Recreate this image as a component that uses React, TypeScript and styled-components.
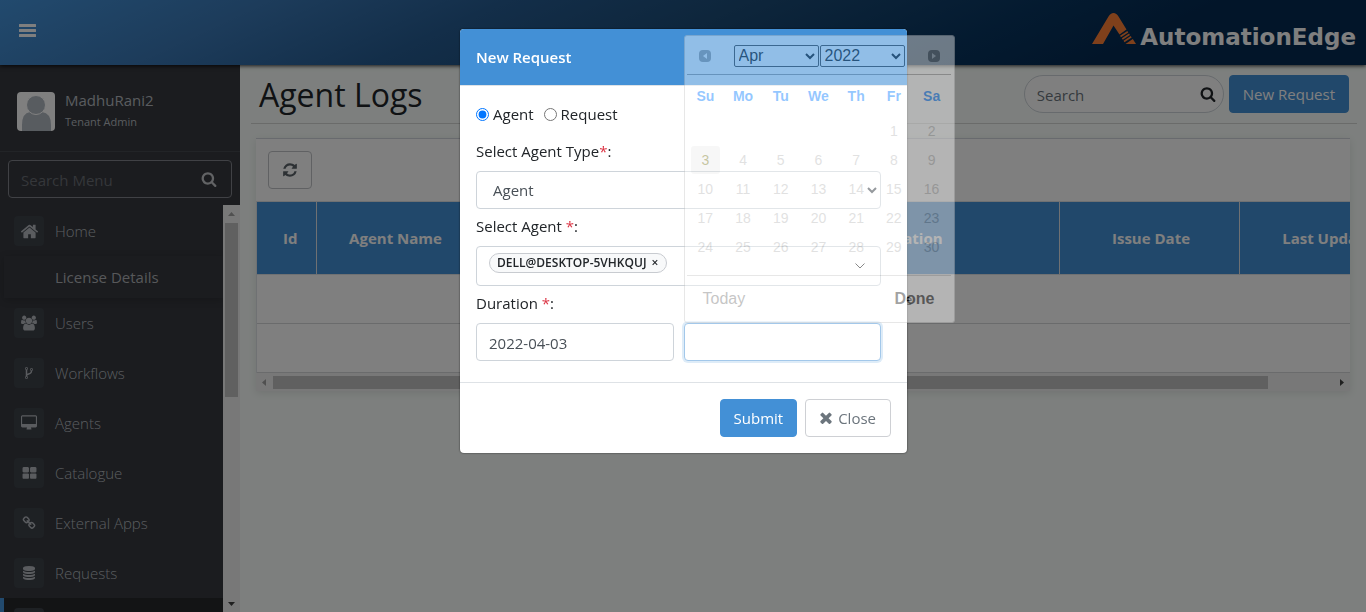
import React from 'react';
import styled, { createGlobalStyle } from 'styled-components';

const GlobalStyle = createGlobalStyle`
  *, *::before, *::after { box-sizing: border-box; }
  html, body, #root { height: 100%; }
  body {
    margin: 0;
    overflow: hidden;
    background: #fafffc;
    color: #212529;
    font-family: 'Open Sans', 'Noto Sans', sans-serif;
    font-size: 15px;
    line-height: 24px;
  }
  button, input, select { font: inherit; margin: 0; }
  a { color: inherit; text-decoration: none; }
`;

const icons = {
  home: {
    box: '0 0 1792 1792',
    d: 'M1472 992v480q0 26-19 45t-45 19h-384v-384h-256v384h-384q-26 0-45-19t-19-45v-480q0-1 .5-3t.5-3l575-474 575 474q1 2 1 6zm223-69l-62 74q-8 9-21 11h-3q-13 0-21-7l-692-577-692 577q-12 8-24 7-13-2-21-11l-62-74q-8-10-7-23.5t11-21.5l719-599q32-26 76-26t76 26l244 204v-195q0-14 9-23t23-9h192q14 0 23 9t9 23v408l219 182q10 8 11 21.5t-7 23.5z',
  },
  users: {
    box: '0 0 1920 1792',
    d: 'M593 896q-162 5-265 128h-134q-82 0-138-40.5t-56-118.5q0-353 124-353 6 0 43.5 21t97.5 42.5 119 21.5q67 0 133-23-5 37-5 66 0 139 81 256zm1071 637q0 120-73 189.5t-194 69.5h-874q-121 0-194-69.5t-73-189.5q0-53 3.5-103.5t14-109 26.5-108.5 43-97.5 62-81 85.5-53.5 111.5-20q10 0 43 21.5t73 48 107 48 135 21.5 135-21.5 107-48 73-48 43-21.5q61 0 111.5 20t85.5 53.5 62 81 43 97.5 26.5 108.5 14 109 3.5 103.5zm-1024-1277q0 106-75 181t-181 75-181-75-75-181 75-181 181-75 181 75 75 181zm704 384q0 159-112.5 271.5t-271.5 112.5-271.5-112.5-112.5-271.5 112.5-271.5 271.5-112.5 271.5 112.5 112.5 271.5zm576 225q0 78-56 118.5t-138 40.5h-134q-103-123-265-128 81-117 81-256 0-29-5-66 66 23 133 23 59 0 119-21.5t97.5-42.5 43.5-21q124 0 124 353zm-128-609q0 106-75 181t-181 75-181-75-75-181 75-181 181-75 181 75 75 181z',
  },
  fork: {
    box: '0 0 1792 1792',
    d: 'M672 1472q0-40-28-68t-68-28-68 28-28 68 28 68 68 28 68-28 28-68zm0-1152q0-40-28-68t-68-28-68 28-28 68 28 68 68 28 68-28 28-68zm640 128q0-40-28-68t-68-28-68 28-28 68 28 68 68 28 68-28 28-68zm96 0q0 52-26 96.5t-70 69.5q-2 287-226 414-67 38-203 81-128 40-169.5 71t-41.5 100v26q44 25 70 69.5t26 96.5q0 80-56 136t-136 56-136-56-56-136q0-52 26-96.5t70-69.5v-820q-44-25-70-69.5t-26-96.5q0-80 56-136t136-56 136 56 56 136q0 52-26 96.5t-70 69.5v497q54-26 154-57 55-17 87.5-29.5t70.5-31 59-39.5 40.5-51 28-69.5 8.5-91.5q-44-25-70-69.5t-26-96.5q0-80 56-136t136-56 136 56 56 136z',
  },
  desktop: {
    box: '0 0 1856 1792',
    d: 'M1728 992v-832q0-13-9.5-22.5t-22.5-9.5h-1536q-13 0-22.5 9.5t-9.5 22.5v832q0 13 9.5 22.5t22.5 9.5h1536q13 0 22.5-9.5t9.5-22.5zm128-832v1088q0 66-47 113t-113 47h-544q0 37 16 77.5t32 71 16 43.5q0 26-19 45t-45 19h-448q-26 0-45-19t-19-45q0-14 16-44t32-70 16-78h-544q-66 0-113-47t-47-113v-1088q0-66 47-113t113-47h1536q66 0 113 47t47 113z',
  },
  grid: {
    box: '0 0 1792 1792',
    d: 'M832 1024v384q0 52-38 90t-90 38h-512q-52 0-90-38t-38-90v-384q0-52 38-90t90-38h512q52 0 90 38t38 90zm0-768v384q0 52-38 90t-90 38h-512q-52 0-90-38t-38-90v-384q0-52 38-90t90-38h512q52 0 90 38t38 90zm896 768v384q0 52-38 90t-90 38h-512q-52 0-90-38t-38-90v-384q0-52 38-90t90-38h512q52 0 90 38t38 90zm0-768v384q0 52-38 90t-90 38h-512q-52 0-90-38t-38-90v-384q0-52 38-90t90-38h512q52 0 90 38t38 90z',
  },
  link: {
    box: '0 0 1792 1792',
    d: 'M1520 1216q0-40-28-68l-208-208q-28-28-68-28-42 0-72 32 3 3 19 18.5t21.5 21.5 15 19 13 25.5 3.5 27.5q0 40-28 68t-68 28q-15 0-27.5-3.5t-25.5-13-19-15-21.5-21.5-18.5-19q-33 31-33 73 0 40 28 68l206 207q27 27 68 27 40 0 68-26l147-146q28-28 28-67zm-703-705q0-40-28-68l-206-207q-28-28-68-28-39 0-68 27l-147 146q-28 28-28 67 0 40 28 68l208 208q27 27 68 27 42 0 72-31-3-3-19-18.5t-21.5-21.5-15-19-13-25.5-3.5-27.5q0-40 28-68t68-28q15 0 27.5 3.5t25.5 13 19 15 21.5 21.5 18.5 19q33-31 33-73zm895 705q0 120-85 203l-147 146q-83 83-203 83-121 0-204-85l-206-207q-83-83-83-203 0-123 88-209l-88-88q-86 88-208 88-120 0-204-84l-208-208q-84-84-84-204t85-203l147-146q83-83 203-83 121 0 204 85l206 207q83 83 83 203 0 123-88 209l88 88q86-88 208-88 120 0 204 84l208 208q84 84 84 204z',
  },
  database: {
    box: '0 0 1792 1792',
    d: 'M896 768q237 0 443-43t325-127v170q0 69-103 128t-280 93.5-385 34.5-385-34.5-280-93.5-103-128v-170q119 84 325 127t443 43zm0 768q237 0 443-43t325-127v170q0 69-103 128t-280 93.5-385 34.5-385-34.5-280-93.5-103-128v-170q119 84 325 127t443 43zm0-384q237 0 443-43t325-127v170q0 69-103 128t-280 93.5-385 34.5-385-34.5-280-93.5-103-128v-170q119 84 325 127t443 43zm0-1152q208 0 385 34.5t280 93.5 103 128v128q0 69-103 128t-280 93.5-385 34.5-385-34.5-280-93.5-103-128v-128q0-69 103-128t280-93.5 385-34.5z',
  },
  search: {
    box: '0 0 1792 1792',
    d: 'M1216 832q0-185-131.5-316.5t-316.5-131.5-316.5 131.5-131.5 316.5 131.5 316.5 316.5 131.5 316.5-131.5 131.5-316.5zm512 832q0 52-38 90t-90 38q-54 0-90-38l-343-342q-179 124-399 124-143 0-273.5-55.5t-225-150-150-225-55.5-273.5 55.5-273.5 150-225 225-150 273.5-55.5 273.5 55.5 225 150 150 225 55.5 273.5q0 220-124 399l343 343q37 37 37 90z',
  },
  refresh: {
    box: '0 0 1792 1792',
    d: 'M1639 1056q0 5-1 7-64 268-268 434.5t-478 166.5q-146 0-282.5-55t-243.5-157l-129 129q-19 19-45 19t-45-19-19-45v-448q0-26 19-45t45-19h448q26 0 45 19t19 45-19 45l-137 137q71 66 161 102t187 36q134 0 250-65t186-179q11-17 53-117 8-23 30-23h192q13 0 22.5 9.5t9.5 22.5zm25-800v448q0 26-19 45t-45 19h-448q-26 0-45-19t-19-45 19-45l138-138q-148-137-349-137-134 0-250 65t-186 179q-11 17-53 117-8 23-30 23h-199q-13 0-22.5-9.5t-9.5-22.5v-7q65-268 270-434.5t480-166.5q146 0 284 55.5t245 156.5l130-129q19-19 45-19t45 19 19 45z',
  },
  times: {
    box: '302 302 1188 1252',
    d: 'M1490 1322q0 40-28 68l-136 136q-28 28-68 28t-68-28l-294-294-294 294q-28 28-68 28t-68-28l-136-136q-28-28-28-68t28-68l294-294-294-294q-28-28-28-68t28-68l136-136q28-28 68-28t68 28l294 294 294-294q28-28 68-28t68 28l136 136q28 28 28 68t-28 68l-294 294 294 294q28 28 28 68z',
  },
  bars: {
    box: '0 0 17 13',
    d: 'M0.5 0h16q.5 0 .5.5v2q0 .5-.5.5h-16q-.5 0-.5-.5v-2q0-.5.5-.5zM0.5 5h16q.5 0 .5.5v2q0 .5-.5.5h-16q-.5 0-.5-.5v-2q0-.5.5-.5zM0.5 10h16q.5 0 .5.5v2q0 .5-.5.5h-16q-.5 0-.5-.5v-2q0-.5.5-.5z',
  },
};

type IconName = keyof typeof icons;

const Glyph = styled.svg<{ $size: number }>`
  display: block;
  flex: none;
  width: ${(p) => p.$size}px;
  height: ${(p) => p.$size}px;
  fill: currentColor;
`;

const Icon = ({ name, size }: { name: IconName; size: number }) => (
  <Glyph $size={size} viewBox={icons[name].box} aria-hidden="true">
    <path d={icons[name].d} />
  </Glyph>
);

/* ---------- page shell ---------- */

const Shell = styled.div`
  display: flex;
  flex-direction: column;
  height: 100%;
`;

const TopBar = styled.header`
  position: relative;
  z-index: 2;
  display: flex;
  flex: none;
  align-items: center;
  justify-content: space-between;
  height: 65px;
  padding: 0 10px 4px 19px;
  background: linear-gradient(155deg, #4494dc 0%, #3a78b6 18%, #265c92 34%, #1c4c78 50%, #083560 70%, #042a52 82%);
  box-shadow: 0 1px 4px rgba(0, 0, 0, 0.8);
`;

const MenuButton = styled.button`
  padding: 0;
  border: 0;
  background: none;
  color: #fff;
`;

const Brand = styled.a`
  display: flex;
  align-items: flex-end;
  gap: 4px;
  color: #fff;
`;

const BrandMark = styled.svg`
  display: block;
  width: 44px;
  height: 31px;
  margin-bottom: 5px;
`;

const BrandName = styled.span`
  font-family: 'DejaVu Sans', sans-serif;
  font-weight: 700;
  font-size: 23px;
  line-height: 24px;
`;

const Columns = styled.div`
  display: flex;
  flex: 1;
  min-height: 0;
`;

/* ---------- sidebar ---------- */

const Sidebar = styled.aside`
  display: flex;
  flex: none;
  flex-direction: column;
  width: 240px;
  background: #36383e;
  color: #b4b8be;
`;

const Profile = styled.div`
  display: flex;
  flex: none;
  align-items: center;
  gap: 10px;
  height: 87px;
  padding: 6px 17px 0;
  border-bottom: 1px solid #45484f;
`;

const Avatar = styled.svg`
  display: block;
  width: 38px;
  height: 39px;
  border-radius: 4px;
  background: #fff;
`;

const ProfileText = styled.div`
  display: flex;
  flex-direction: column;
`;

const UserName = styled.span`
  line-height: 22px;
`;

const UserRole = styled.span`
  font-size: 11px;
  line-height: 22px;
`;

const MenuSearch = styled.label`
  display: flex;
  flex: none;
  align-items: center;
  height: 38px;
  margin: 8px 8px 7px;
  padding: 0 14px 0 12px;
  border: 1px solid #80838a;
  border-radius: 4px;
  color: #c4c6ca;
`;

const PlainInput = styled.input<{ $hint: string }>`
  flex: 1;
  min-width: 0;
  padding: 2px 0 0;
  border: 0;
  outline: 0;
  background: none;
  color: inherit;
  &::placeholder { color: ${(p) => p.$hint}; opacity: 1; }
`;

const MenuArea = styled.div`
  display: flex;
  flex: 1;
  min-height: 0;
`;

const Menu = styled.nav`
  flex: 1;
  overflow: hidden;
  padding-top: 1px;
  font-weight: 300;
`;

const MenuItem = styled.a<{ $active?: boolean }>`
  display: flex;
  align-items: center;
  gap: 11px;
  height: 50px;
  padding-left: ${(p) => (p.$active ? 10 : 14)}px;
  border-left: ${(p) => (p.$active ? '4px solid #4494dc' : '0')};
  background: ${(p) => (p.$active ? '#26282b' : 'none')};
`;

const SubItem = styled.a`
  display: flex;
  align-items: center;
  height: 42px;
  margin-left: 4px;
  padding-left: 51px;
  color: #aeb1b5;
  font-weight: 400;
  box-shadow: 0 2px 8px rgba(0, 0, 0, 0.2);
`;

const IconTile = styled.span`
  display: grid;
  place-items: center;
  width: 30px;
  height: 30px;
  border-radius: 4px;
  background: #3c4249;
`;

const Rail = styled.div<{ $across?: boolean }>`
  display: flex;
  flex: none;
  flex-direction: ${(p) => (p.$across ? 'row' : 'column')};
  align-items: center;
  justify-content: space-between;
  ${(p) => (p.$across ? 'height: 18px; padding: 0 4px;' : 'width: 17px; padding: 5px 0;')}
  background: #f1f1f1;
`;

const Track = styled.div<{ $across?: boolean }>`
  flex: 1;
  ${(p) => (p.$across ? 'height: 13px; margin: 0 7px 0 6px;' : 'width: 13px; margin: 6px 0;')}
`;

const Thumb = styled.div<{ $across?: boolean }>`
  background: #c1c1c1;
  ${(p) => (p.$across ? 'height: 13px; width: 94%;' : 'width: 13px; height: 47%;')}
`;

const Arrow = styled.svg`
  display: block;
  flex: none;
  width: 7px;
  height: 7px;
`;

/* ---------- content ---------- */

const Main = styled.main`
  flex: 1;
  min-width: 0;
  padding: 0 9px 0 11px;
`;

const TitleBar = styled.div`
  display: flex;
  align-items: center;
  gap: 5px;
  height: 59px;
  padding: 0 8px;
  border-bottom: 1px solid #d4d6d5;
`;

const Title = styled.h1`
  flex: 1;
  margin: 0;
  padding-top: 2px;
  font-size: 32px;
  font-weight: 400;
  line-height: 40px;
`;

const SearchPill = styled.label`
  display: flex;
  align-items: center;
  width: 200px;
  height: 38px;
  padding: 0 7px 0 12px;
  border: 1px solid #ced4da;
  border-radius: 19px;
  background: #fff;
  color: #212529;
`;

const Button = styled.button<{ $primary?: boolean }>`
  display: flex;
  align-items: center;
  justify-content: center;
  gap: 6px;
  height: 38px;
  padding: 0 ${(p) => (p.$primary ? 13 : 14)}px;
  border: 1px solid ${(p) => (p.$primary ? '#4390d6' : '#ced0d4')};
  border-radius: 4px;
  background: ${(p) => (p.$primary ? '#4390d6' : '#fff')};
  color: ${(p) => (p.$primary ? '#fff' : '#6c757d')};
`;

const Card = styled.section`
  margin: 14px 7px 0 5px;
  border-top: 1px solid #d0d4dc;
  background: #fff;
  box-shadow: 0 2px 8px rgba(0, 0, 0, 0.1);
`;

const CardTools = styled.div`
  padding: 12px;
`;

const RefreshButton = styled(Button)`
  width: 44px;
  padding: 0;
  border-color: #c0c2c6;
  color: #5a6268;
`;

const TableWindow = styled.div`
  overflow: hidden;
  border-left: 1px solid #dee2e6;
`;

const LogTable = styled.table`
  width: 1164px;
  table-layout: fixed;
  border-collapse: collapse;
  text-align: center;
`;

const HeadCell = styled.th<{ $width: number }>`
  width: ${(p) => p.$width}px;
  height: 73px;
  padding: 0 12px 0 ${(p) => (p.$width < 80 ? 20 : 16)}px;
  border: 1px solid #dee2e6;
  border-left: 0;
  background: #4390d6;
  color: #fff;
  font-weight: 700;
  white-space: nowrap;
`;

const BodyCell = styled.td`
  height: 49px;
  padding: 0;
  border-bottom: 1px solid #d4d6d8;
  color: #000;
`;

/* ---------- dialog ---------- */

const Backdrop = styled.div`
  position: fixed;
  inset: 0;
  z-index: 10;
  display: flex;
  align-items: flex-start;
  justify-content: center;
  padding: 29px 0 0 1px;
  background: rgba(0, 0, 0, 0.5);
`;

const Dialog = styled.form`
  width: 447px;
  border-radius: 4px;
  background: #fff;
  box-shadow: 0 0 2px rgba(0, 0, 0, 0.7);
`;

const DialogHead = styled.h2`
  margin: 0;
  padding: 16px;
  border-bottom: 1px solid #dee2e6;
  border-radius: 4px 4px 0 0;
  background: #4390d6;
  color: #fff;
  font-size: 15px;
  font-weight: 600;
  line-height: 24px;
`;

const DialogBody = styled.div`
  display: flex;
  flex-direction: column;
  padding: 16px 26px 21px 16px;
`;

const RadioRow = styled.div`
  display: flex;
  gap: 10px;
  margin-bottom: 13px;
`;

const RadioLabel = styled.label`
  display: flex;
  align-items: center;
  gap: 4px;
`;

const Radio = styled.input`
  width: 13px;
  height: 13px;
  accent-color: #0075ff;
`;

const FieldLabel = styled.label`
  margin-bottom: 8px;
  line-height: 24px;
`;

const Required = styled.span`
  color: #dc3545;
`;

const SelectBox = styled.select`
  height: 38px;
  margin-bottom: 5px;
  padding: 0 0 0 12px;
  border: 1px solid #ced4da;
  border-radius: 4px;
  background: #fff;
  color: #495057;
`;

const ChipBox = styled.div`
  display: flex;
  align-items: center;
  justify-content: space-between;
  height: 40px;
  margin-bottom: 5px;
  padding: 0 15px 0 12px;
  border: 1px solid #ced4da;
  border-radius: 4px;
`;

const Chip = styled.button`
  display: flex;
  align-items: center;
  gap: 5px;
  height: 20px;
  margin-bottom: 6px;
  padding: 0 8px 0 7px;
  border: 1px solid #c8cbd0;
  border-radius: 10px;
  background: #f8f9fa;
  color: #212529;
  font-size: 12px;
  font-weight: 600;
  line-height: 18px;
`;

const Caret = styled.svg`
  width: 10px;
  height: 6px;
  fill: none;
  stroke: #333;
`;

const DateRow = styled.div`
  display: grid;
  grid-template-columns: 1fr 1fr;
  gap: 10px;
`;

const DateField = styled.div`
  position: relative;
  display: flex;
`;

const DateInput = styled.input<{ $focused?: boolean }>`
  width: 100%;
  height: 38px;
  padding: 2px 12px 0;
  border: 1px solid ${(p) => (p.$focused ? '#a3c8ea' : '#ced4da')};
  border-radius: 4px;
  outline: 0;
  background: #fff;
  color: #495057;
  box-shadow: ${(p) => (p.$focused ? '0 0 0 2px #deecf8' : 'none')};
`;

const DialogFoot = styled.div`
  display: flex;
  justify-content: flex-end;
  gap: 8px;
  padding: 16px;
  border-top: 1px solid #dee2e6;
`;

/* ---------- date picker ---------- */

const Picker = styled.div`
  position: absolute;
  left: 0;
  bottom: 100%;
  width: 271px;
  padding: 3px 3px 0 2px;
  border: 1px solid #c5c5c5;
  border-radius: 3px;
  background: #fff;
  color: #333;
  font-family: 'Liberation Sans', Arial, sans-serif;
  opacity: 0.42;
`;

const PickerHead = styled.div`
  display: flex;
  align-items: center;
  justify-content: space-between;
  height: 36px;
  padding: 0 11px 2px 12px;
  border-bottom: 1px solid #999;
`;

const PickerSelects = styled.div`
  display: flex;
  gap: 1px;
`;

const PickerSelect = styled.select`
  width: 85px;
  height: 22px;
  padding: 0;
  border: 1px solid #333;
  border-radius: 2px;
  background: transparent;
  color: #000;
  font-size: 16px;
`;

const StepButton = styled.button`
  display: grid;
  place-items: center;
  width: 12px;
  height: 12px;
  padding: 0;
  border: 0;
  border-radius: 4px;
  background: #4a4a4a;
  opacity: 0.55;
`;

const StepArrow = styled.svg`
  display: block;
  width: 4px;
  height: 6px;
  fill: #fff;
`;

const Days = styled.table`
  width: 100%;
  table-layout: fixed;
  border-collapse: collapse;
  margin-bottom: 14px;
  text-align: center;
  font-size: 14px;
  line-height: 20px;
`;

const WeekDay = styled.th`
  height: 41px;
  padding: 0;
  color: #007bff;
  font-weight: 700;
`;

const Day = styled.td`
  height: 29px;
  padding: 0 4px;
  color: #b8b8b8;
`;

const DayMark = styled.span<{ $today?: boolean }>`
  display: block;
  line-height: 28px;
  border-radius: 3px;
  background: ${(p) => (p.$today ? '#ededed' : 'none')};
  color: ${(p) => (p.$today ? '#777620' : 'inherit')};
`;

const PickerFoot = styled.div`
  display: flex;
  align-items: center;
  justify-content: space-between;
  height: 47px;
  padding: 0 16px;
  border-top: 1px solid #c5c5c5;
`;

const PickerAction = styled.button<{ $strong?: boolean }>`
  padding: 0;
  border: 0;
  background: none;
  color: ${(p) => (p.$strong ? '#222' : '#777')};
  font-size: 16px;
  font-weight: ${(p) => (p.$strong ? 700 : 400)};
`;

const menu: { label: string; icon: IconName; size: number }[] = [
  { label: 'Users', icon: 'users', size: 16 },
  { label: 'Workflows', icon: 'fork', size: 14 },
  { label: 'Agents', icon: 'desktop', size: 16 },
  { label: 'Catalogue', icon: 'grid', size: 15 },
  { label: 'External Apps', icon: 'link', size: 14 },
  { label: 'Requests', icon: 'database', size: 14 },
];

const columns = [
  { label: 'Id', width: 59 },
  { label: 'Agent Name', width: 155 },
  { label: 'Agent Type', width: 284 },
  { label: 'Duration', width: 304 },
  { label: 'Issue Date', width: 180 },
  { label: 'Last Updated', width: 182 },
];

const weeks: (number | null)[][] = [
  [null, null, null, null, null, 1, 2],
  [3, 4, 5, 6, 7, 8, 9],
  [10, 11, 12, 13, 14, 15, 16],
  [17, 18, 19, 20, 21, 22, 23],
  [24, 25, 26, 27, 28, 29, 30],
];

const Logo = () => (
  <Brand href="#home" aria-label="AutomationEdge">
    <BrandMark viewBox="0 0 44 31" aria-hidden="true">
      <path
        fill="#ff8136"
        d="M0 31L16.500 3.500Q18.500 0 21.500 0Q24.500 0 26.500 3.500L34.500 16.500L27.500 21.500L21.500 12.500L11 31Z"
      />
      <path
        stroke="#ff8136"
        strokeWidth="1.700"
        fill="none"
        d="M28.500 23.500L35.800 18.700M30.300 26L37.500 21.300M32 28.500L39.200 23.800"
      />
      <path fill="#ff8136" d="M33.500 31L40.800 26L44 31Z" />
    </BrandMark>
    <BrandName>AutomationEdge</BrandName>
  </Brand>
);

const DatePicker = () => (
  <Picker>
    <PickerHead>
      <StepButton type="button" aria-label="Previous month">
        <StepArrow viewBox="0 0 4 6"><path d="M4 0v6L0 3z" /></StepArrow>
      </StepButton>
      <PickerSelects>
        <PickerSelect aria-label="Month" defaultValue="Apr"><option>Apr</option></PickerSelect>
        <PickerSelect aria-label="Year" defaultValue="2022"><option>2022</option></PickerSelect>
      </PickerSelects>
      <StepButton type="button" aria-label="Next month">
        <StepArrow viewBox="0 0 4 6"><path d="M0 0v6l4-3z" /></StepArrow>
      </StepButton>
    </PickerHead>
    <Days>
      <thead>
        <tr>{['Su', 'Mo', 'Tu', 'We', 'Th', 'Fr', 'Sa'].map((d) => <WeekDay key={d} scope="col">{d}</WeekDay>)}</tr>
      </thead>
      <tbody>
        {weeks.map((week, i) => (
          <tr key={i}>
            {week.map((day, j) => (
              <Day key={j}>{day && <DayMark $today={day === 3}>{day}</DayMark>}</Day>
            ))}
          </tr>
        ))}
      </tbody>
    </Days>
    <PickerFoot>
      <PickerAction type="button">Today</PickerAction>
      <PickerAction type="button" $strong>Done</PickerAction>
    </PickerFoot>
  </Picker>
);

export default function App() {
  return (
    <>
      <GlobalStyle />
      <Shell>
        <TopBar>
          <MenuButton aria-label="Toggle menu"><Icon name="bars" size={17} /></MenuButton>
          <Logo />
        </TopBar>
        <Columns>
          <Sidebar>
            <Profile>
              <Avatar viewBox="0 0 38 39" aria-hidden="true">
                <path fill="#b0b8c1" d="M5 39v-6Q5 21 13 20Q19 25 25 20Q34 21 34 33v6z" />
                <circle cx="19" cy="13" r="9.500" fill="#b0b8c1" stroke="#fff" />
              </Avatar>
              <ProfileText>
                <UserName>MadhuRani2</UserName>
                <UserRole>Tenant Admin</UserRole>
              </ProfileText>
            </Profile>
            <MenuSearch>
              <PlainInput $hint="#6a6e75" placeholder="Search Menu" aria-label="Search Menu" />
              <Icon name="search" size={16} />
            </MenuSearch>
            <MenuArea>
              <Menu>
                <MenuItem href="#home">
                  <IconTile><Icon name="home" size={19} /></IconTile>Home
                </MenuItem>
                <SubItem href="#license">License Details</SubItem>
                {menu.map((m) => (
                  <MenuItem key={m.label} href="#menu">
                    <IconTile><Icon name={m.icon} size={m.size} /></IconTile>{m.label}
                  </MenuItem>
                ))}
                <MenuItem href="#logs" $active aria-label="Agent Logs"><IconTile /></MenuItem>
              </Menu>
              <Rail>
                <Arrow viewBox="0 0 7 7"><path fill="#a0a0a0" d="M0 6h7L3.500 2z" /></Arrow>
                <Track><Thumb /></Track>
                <Arrow viewBox="0 0 7 7"><path fill="#404040" d="M0 2h7L3.500 6z" /></Arrow>
              </Rail>
            </MenuArea>
          </Sidebar>
          <Main>
            <TitleBar>
              <Title>Agent Logs</Title>
              <SearchPill>
                <PlainInput $hint="#6c757d" placeholder="Search" aria-label="Search" />
                <Icon name="search" size={16} />
              </SearchPill>
              <Button $primary>New Request</Button>
            </TitleBar>
            <Card>
              <CardTools>
                <RefreshButton aria-label="Refresh"><Icon name="refresh" size={16} /></RefreshButton>
              </CardTools>
              <TableWindow>
                <LogTable>
                  <thead>
                    <tr>{columns.map((c) => <HeadCell key={c.label} $width={c.width}>{c.label}</HeadCell>)}</tr>
                  </thead>
                  <tbody>
                    <tr><BodyCell colSpan={6}>No Records Available</BodyCell></tr>
                    <tr><BodyCell colSpan={6} /></tr>
                  </tbody>
                </LogTable>
              </TableWindow>
              <Rail $across>
                <Arrow viewBox="0 0 7 7"><path fill="#a0a0a0" d="M6 0v7L2 3.500z" /></Arrow>
                <Track $across><Thumb $across /></Track>
                <Arrow viewBox="0 0 7 7"><path fill="#404040" d="M1 0v7l4-3.500z" /></Arrow>
              </Rail>
            </Card>
          </Main>
        </Columns>
      </Shell>
      <Backdrop>
        <Dialog role="dialog" aria-labelledby="dialog-title" onSubmit={(e: React.FormEvent) => e.preventDefault()}>
          <DialogHead id="dialog-title">New Request</DialogHead>
          <DialogBody>
            <RadioRow>
              <RadioLabel><Radio type="radio" name="kind" defaultChecked />Agent</RadioLabel>
              <RadioLabel><Radio type="radio" name="kind" />Request</RadioLabel>
            </RadioRow>
            <FieldLabel htmlFor="agent-type">Select Agent Type<Required>*</Required>:</FieldLabel>
            <SelectBox id="agent-type" defaultValue="Agent"><option>Agent</option></SelectBox>
            <FieldLabel htmlFor="agent">Select Agent <Required>*</Required>:</FieldLabel>
            <ChipBox>
              <Chip id="agent" type="button">DELL@DESKTOP-5VHKQUJ <span>×</span></Chip>
              <Caret viewBox="0 0 10 6" aria-hidden="true"><path d="M.5.5L5 5L9.500.5" /></Caret>
            </ChipBox>
            <FieldLabel htmlFor="from">Duration <Required>*</Required>:</FieldLabel>
            <DateRow>
              <DateField><DateInput id="from" defaultValue="2022-04-03" /></DateField>
              <DateField>
                <DateInput $focused aria-label="End date" />
                <DatePicker />
              </DateField>
            </DateRow>
          </DialogBody>
          <DialogFoot>
            <Button type="submit" $primary>Submit</Button>
            <Button type="button"><Icon name="times" size={12} />Close</Button>
          </DialogFoot>
        </Dialog>
      </Backdrop>
    </>
  );
}
